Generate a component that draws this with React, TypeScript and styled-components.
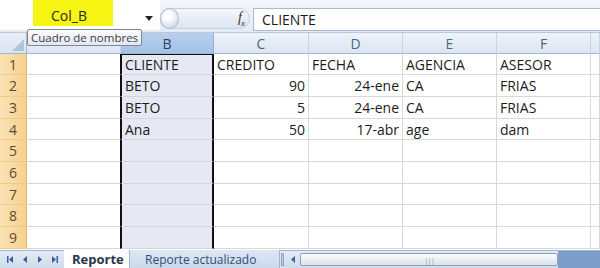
import React from "react";
import styled, { createGlobalStyle } from "styled-components";

const GlobalStyle = createGlobalStyle`
  html, body {
    margin: 0;
    padding: 0;
    width: 600px;
    height: 268px;
    overflow: hidden;
    background: #fff;
  }
  * { box-sizing: border-box; }
`;

const COLS = [
  { name: "A", w: 94 },
  { name: "B", w: 93 },
  { name: "C", w: 95 },
  { name: "D", w: 94 },
  { name: "E", w: 94 },
  { name: "F", w: 94 },
  { name: "", w: 9 },
];

const ROW_H = [21, 22, 22, 21, 22, 22, 21, 22, 22];

type CellData = { v: string; right?: boolean };
const DATA: CellData[][] = [
  [{ v: "" }, { v: "CLIENTE" }, { v: "CREDITO" }, { v: "FECHA" }, { v: "AGENCIA" }, { v: "ASESOR" }],
  [{ v: "" }, { v: "BETO" }, { v: "90", right: true }, { v: "24-ene", right: true }, { v: "CA" }, { v: "FRIAS" }],
  [{ v: "" }, { v: "BETO" }, { v: "5", right: true }, { v: "24-ene", right: true }, { v: "CA" }, { v: "FRIAS" }],
  [{ v: "" }, { v: "Ana" }, { v: "50", right: true }, { v: "17-abr", right: true }, { v: "age" }, { v: "dam" }],
];

const Page = styled.div`
  width: 600px;
  height: 268px;
  display: flex;
  flex-direction: column;
  font-family: "Open Sans", "Noto Sans", sans-serif;
  position: relative;
  overflow: hidden;
`;

const FormulaBar = styled.div`
  height: 33px;
  display: flex;
  align-items: flex-start;
  background: linear-gradient(#f3f6fb, #e4ebf5);
  border-bottom: 1px solid #b9c9dd;
`;

const NameBox = styled.div`
  width: 160px;
  height: 30px;
  display: flex;
  align-items: flex-start;
  padding-left: 33px;
  background: #fff;
`;

const Highlight = styled.div`
  width: 80px;
  height: 26px;
  background: #f7f514;
  display: flex;
  align-items: flex-end;
  justify-content: center;
  padding-bottom: 1px;
  padding-right: 8px;
  font-size: 14px;
  color: #2b2b1a;
`;

const DropArrow = styled.div`
  margin-left: 32px;
  margin-top: 16px;
  width: 0;
  height: 0;
  border-left: 4px solid transparent;
  border-right: 4px solid transparent;
  border-top: 5px solid #222;
`;

const FxPill = styled.div`
  margin-top: 8px;
  width: 90px;
  height: 21px;
  border-radius: 11px;
  background: linear-gradient(#f4f7fb, #dde5f0);
  border: 1px solid #c4d0e0;
  display: flex;
  align-items: center;
  justify-content: space-between;
  padding-right: 5px;
`;

const RoundBtn = styled.div`
  width: 19px;
  height: 21px;
  margin-left: -1px;
  border-radius: 50%;
  background: radial-gradient(circle at 40% 35%, #ffffff 20%, #d4dcea 80%);
  border: 1px solid #b0bdd0;
`;

const Fx = styled.span`
  font-family: "Liberation Serif", serif;
  font-style: italic;
  font-size: 14px;
  color: #333;
  letter-spacing: -1px;
  sub {
    font-size: 9px;
  }
`;

const FormulaInput = styled.div`
  margin-top: 8px;
  margin-left: 3px;
  flex: 1;
  height: 23px;
  background: #fff;
  border: 1px solid #a9b9cf;
  border-right: none;
  padding-left: 8px;
  font-size: 14px;
  line-height: 21px;
  color: #1a1a1a;
`;

const Tooltip = styled.div`
  position: absolute;
  left: 27px;
  top: 29px;
  height: 17px;
  padding: 0 3px;
  background: linear-gradient(#fbfcfe, #e3e8f1);
  border: 1px solid #7d8693;
  border-radius: 2px;
  font-size: 11.5px;
  line-height: 15px;
  color: #3c3c3c;
  z-index: 2;
`;

const Grid = styled.div`
  flex: 1;
  display: grid;
  grid-template-columns: 27px ${COLS.map((c) => c.w + "px").join(" ")};
  grid-template-rows: 21px ${ROW_H.map((h) => h + "px").join(" ")};
  overflow: hidden;
`;

const Corner = styled.div`
  background: linear-gradient(#e9eff8, #d9e3f0);
  border-right: 1px solid #9eb6ce;
  border-bottom: 1px solid #9eb6ce;
  position: relative;
  &::after {
    content: "";
    position: absolute;
    right: 2px;
    bottom: 2px;
    border-left: 12px solid transparent;
    border-bottom: 12px solid #b4c3d6;
  }
`;

const ColHead = styled.div<{ $sel?: boolean }>`
  background: ${(p) =>
    p.$sel ? "linear-gradient(#b9d0ec, #a5c1e6)" : "linear-gradient(#eef3fa, #dbe5f1)"};
  border-right: 1px solid ${(p) => (p.$sel ? "#91aed6" : "#c5d3e3")};
  border-bottom: 1px solid #9eb6ce;
  display: flex;
  align-items: center;
  justify-content: center;
  font-size: 14px;
  color: ${(p) => (p.$sel ? "#27415f" : "#4f6580")};
`;

const RowHead = styled.div`
  background: linear-gradient(90deg, #fbe3b6, #f7d08d);
  border-right: 1px solid #e3b66a;
  border-bottom: 1px solid #f0c98a;
  display: flex;
  align-items: center;
  justify-content: center;
  font-size: 14px;
  color: #5b4a2c;
`;

const Cell = styled.div<{ $sel?: boolean; $right?: boolean; $top?: boolean }>`
  background: ${(p) => (p.$sel ? "#e6e9f3" : "#fff")};
  border-right: 1px solid #d8d8d8;
  border-bottom: 1px solid #d8d8d8;
  ${(p) =>
    p.$sel &&
    `
    border-left: 2px solid #111;
    border-right: 2px solid #111;
    margin-left: -1px;
    border-bottom-color: #d2d6e0;
  `}
  ${(p) => p.$top && `border-top: 1px solid #111;`}
  display: flex;
  align-items: center;
  justify-content: ${(p) => (p.$right ? "flex-end" : "flex-start")};
  padding: 0 3px;
  font-size: 14px;
  color: #1c1c1c;
  white-space: nowrap;
  overflow: hidden;
`;

const TabBar = styled.div`
  height: 18px;
  display: flex;
  align-items: stretch;
  background: linear-gradient(#e3ebf6, #cfdcec);
  border-top: 1px solid #9eb6ce;
`;

const Nav = styled.div`
  width: 64px;
  display: flex;
  align-items: center;
  justify-content: space-around;
  padding: 0 2px;
`;

const Tab = styled.div<{ $active?: boolean }>`
  display: flex;
  align-items: center;
  width: ${(p) => (p.$active ? "66px" : "150px")};
  padding-left: ${(p) => (p.$active ? "8px" : "15px")};
  margin-top: -1px;
  background: ${(p) => (p.$active ? "#fff" : "linear-gradient(#dfe8f4, #c9d8ec)")};
  border-right: 1px solid #9eb6ce;
  font-size: ${(p) => (p.$active ? "13px" : "12px")};
  font-weight: ${(p) => (p.$active ? 700 : 400)};
  color: ${(p) => (p.$active ? "#27364a" : "#2f4d74")};
  white-space: nowrap;
`;

const Splitter = styled.div`
  width: 20px;
  display: flex;
  align-items: center;
  justify-content: flex-end;
  gap: 5px;
  padding-right: 3px;
  span {
    width: 3px;
    height: 13px;
    background: #b9c9dd;
    border: 1px solid #8ea6c4;
  }
`;

const ScrollTrack = styled.div`
  flex: 1;
  display: flex;
  align-items: stretch;
  padding: 2px 0;
`;

const Thumb = styled.div`
  width: 258px;
  border: 1px solid #8c9fb8;
  border-radius: 2px;
  background: linear-gradient(#fbfcfd, #dde3ea);
  display: flex;
  align-items: center;
  justify-content: center;
  color: #9aa6b4;
  font-size: 8px;
  letter-spacing: -1px;
`;

const Rest = styled.div`
  flex: 1;
  background: #7e9dc8;
  margin: -2px 0;
`;

const NavIcon = ({ d }: { d: string }) => (
  <svg width="8" height="9" viewBox="0 0 8 9">
    <path d={d} fill="#3b6199" />
  </svg>
);

export default function App() {
  return (
    <Page>
      <GlobalStyle />
      <FormulaBar>
        <NameBox>
          <Highlight>Col_B</Highlight>
          <DropArrow />
        </NameBox>
        <FxPill>
          <RoundBtn />
          <Fx>
            f<sub>x</sub>
          </Fx>
        </FxPill>
        <FormulaInput>CLIENTE</FormulaInput>
      </FormulaBar>
      <Tooltip>Cuadro de nombres</Tooltip>
      <Grid>
        <Corner />
        {COLS.map((c, i) => (
          <ColHead key={i} $sel={c.name === "B"}>
            {c.name === "A" ? "" : c.name}
          </ColHead>
        ))}
        {ROW_H.map((_, r) => (
          <React.Fragment key={r}>
            <RowHead>{r + 1}</RowHead>
            {COLS.map((c, ci) => {
              const cell = DATA[r]?.[ci];
              return (
                <Cell
                  key={ci}
                  $sel={c.name === "B"}
                  $top={c.name === "B" && r === 0}
                  $right={cell?.right}
                >
                  {cell?.v}
                </Cell>
              );
            })}
          </React.Fragment>
        ))}
      </Grid>
      <TabBar>
        <Nav>
          <NavIcon d="M1 1h1.5v7H1zM7 1v7L3 4.5z" />
          <NavIcon d="M6 1v7L2 4.5z" />
          <NavIcon d="M2 1v7l4-3.5z" />
          <NavIcon d="M1 1v7l4-3.5zM5.5 1H7v7H5.5z" />
        </Nav>
        <Tab $active>Reporte</Tab>
        <Tab>Reporte actualizado</Tab>
        <Splitter>
          <span />
          <NavIcon d="M6 1v7L2 4.5z" />
        </Splitter>
        <ScrollTrack>
          <Thumb>|||</Thumb>
          <Rest />
        </ScrollTrack>
      </TabBar>
    </Page>
  );
}
